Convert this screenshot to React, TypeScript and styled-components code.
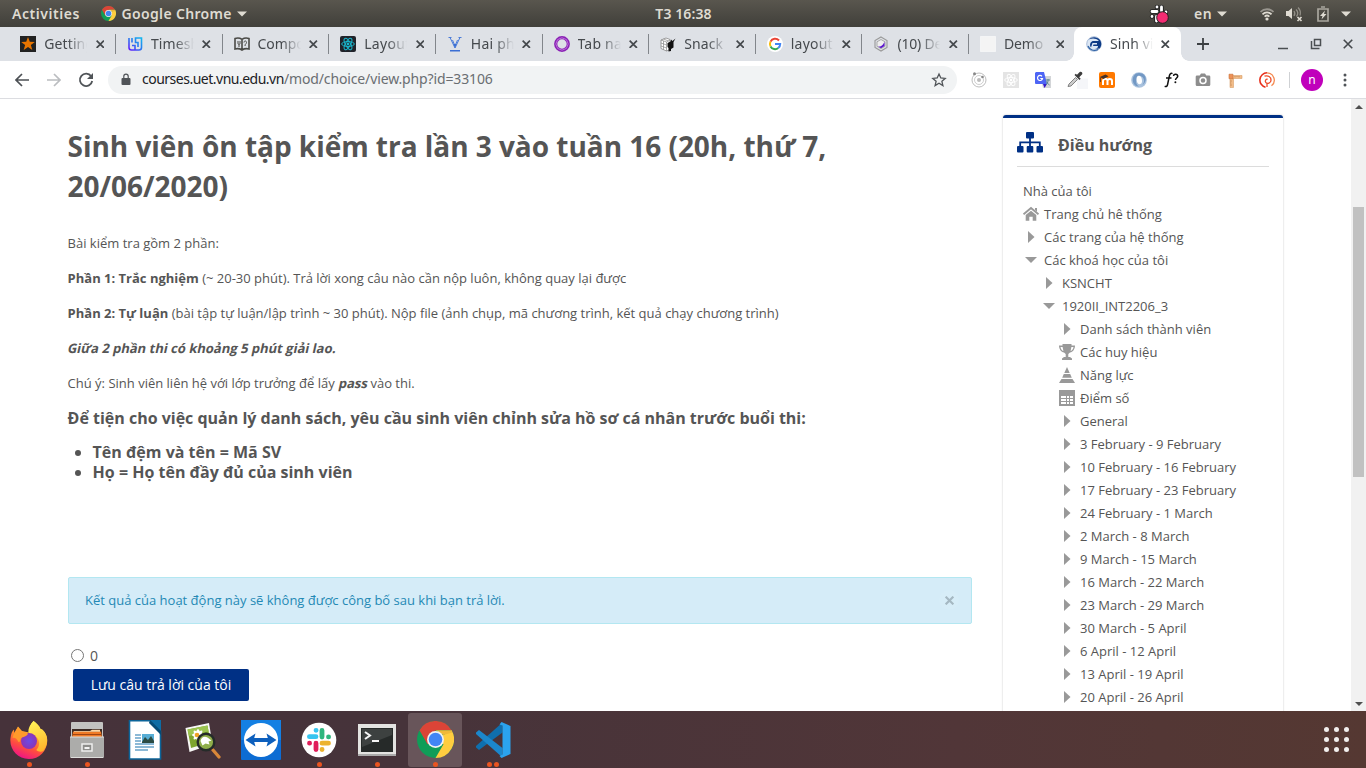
import React from "react";
import styled, { createGlobalStyle, css } from "styled-components";

const Global = createGlobalStyle`
  *{box-sizing:border-box}
  body{margin:0;background:#fff;overflow:hidden;font-family:"Open Sans",sans-serif}
  svg{display:block;flex:none}
  p,h2,h4,ul{margin:0;padding:0}
`;

const ui = css`font-family:"Noto Sans","Open Sans",sans-serif;white-space:nowrap;`;

const Desktop = styled.div`width:1366px;height:768px;display:flex;flex-direction:column;overflow:hidden;`;

const TopBar = styled.header`
  ${ui}height:27px;flex:none;display:grid;grid-template-columns:1fr auto 1fr;align-items:center;
  background:linear-gradient(#59564e,#403f3a);color:#dfdbd2;font-weight:600;font-size:14px;line-height:27px;
`;
const TopLeft = styled.div`display:flex;align-items:center;padding-left:12px;`;
const TopRight = styled.div`display:flex;align-items:center;justify-content:flex-end;height:27px;`;
const TopText = styled.span<{ $ls?: number; $ml?: number }>`
  letter-spacing:${p => p.$ls ?? 0}px;margin-left:${p => p.$ml ?? 0}px;
`;
const Gap = styled.span<{ $w: number }>`width:${p => p.$w}px;flex:none;`;
const Spacer = styled.span`flex:1;`;

const TabStrip = styled.nav`${ui}height:34px;flex:none;background:#dee1e6;display:flex;align-items:stretch;padding-left:9.300px;`;
const Tab = styled.div<{ $active?: boolean }>`
  width:106.650px;flex:none;display:flex;align-items:center;padding-left:11px;position:relative;
  ${p => p.$active ? css`
    background:#fff;border-radius:8px 8px 0 0;margin-left:-1.800px;padding-left:12px;
    &::before,&::after{content:"";position:absolute;bottom:0;width:8px;height:8px;}
    &::before{left:-8px;background:radial-gradient(circle at 0 0,transparent 7.5px,#fff 8px);}
    &::after{right:-8px;background:radial-gradient(circle at 100% 0,transparent 7.5px,#fff 8px);}
  ` : ""}
`;
const TabTitle = styled.span<{ $ls: number }>`
  width:43px;margin-left:8px;overflow:hidden;font-size:14px;line-height:34px;color:#45494d;letter-spacing:${p => p.$ls}px;
  mask-image:linear-gradient(90deg,#000 55%,transparent 100%);
`;
const TabClose = styled.span`margin-left:8.500px;`;
const TabRule = styled.i`width:1px;height:20px;background:#82868b;margin-left:auto;`;
const WindowButtons = styled.div`margin-left:auto;display:flex;align-items:center;gap:21px;padding-right:13px;`;
const NewTab = styled.div`display:flex;align-items:center;padding-left:16px;`;

const Toolbar = styled.div`${ui}height:38px;flex:none;display:flex;align-items:center;border-bottom:1px solid #dcdde1;background:#fff;`;
const Address = styled.div`
  width:849px;height:28px;border-radius:14px;background:#f1f3f4;display:flex;align-items:center;padding:0 10px 0 12px;
  font-size:14px;color:#6a6e72;
`;
const Url = styled.span<{ $ls: number; $host?: boolean }>`letter-spacing:${p => p.$ls}px;margin-top:-2px;${p => p.$host ? "color:#202124;" : ""}`;
const Extensions = styled.div`display:flex;align-items:center;gap:16px;margin-left:14px;`;
const Divider = styled.i`width:1px;height:16px;background:#cfd1d4;margin-left:14px;`;
const Avatar = styled.div`width:22px;height:22px;border-radius:50%;background:#c000bb;color:#fff;font-size:12px;line-height:21px;text-align:center;margin-left:11px;`;

const Viewport = styled.div`height:612px;flex:none;display:flex;overflow:hidden;color:#555;`;
const Main = styled.main`width:904px;margin-left:67.600px;padding-top:27px;flex:none;`;
const Title = styled.h2`font-size:28px;line-height:40px;font-weight:700;color:#555;margin-bottom:27px;letter-spacing:-.035px;`;
const Para = styled.p`font-size:13px;line-height:20px;margin-bottom:15px;`;
const Slanted = styled.strong<{ $shift?: number }>`
  display:inline-block;font-weight:700;transform:skewX(-12deg);margin:0 ${p => -(p.$shift ?? 0)}px 0 ${p => p.$shift ?? 0}px;
`;
const Sub = styled.h4`font-size:16px;line-height:20px;font-weight:700;letter-spacing:-.008px;`;
const Bullets = styled.ul`margin:14px 0 0 25px;font-size:16px;line-height:20px;font-weight:700;`;
const Notice = styled.div`
  height:47px;margin-top:95px;background:#d5ecf8;border:1px solid #b3e7f1;border-radius:2px;color:#2489b5;font-size:13px;
  display:flex;align-items:center;justify-content:space-between;padding:0 15.500px 1px 16.400px;
`;
const Dismiss = styled.span`
  width:20px;height:20px;margin-right:-4px;border-radius:50%;display:flex;align-items:center;justify-content:center;background:#d7edf8;
`;
const Choice = styled.label`display:flex;align-items:center;gap:6px;margin:21px 0 0 3.400px;height:20px;font-size:14px;`;
const Radio = styled.span`width:13px;height:13px;border:1px solid #767676;border-radius:50%;background:#fff;`;
const Submit = styled.button`
  display:block;width:176px;height:32px;margin:4px 0 0 5.400px;border:0;border-radius:2px;background:#003085;color:#fff;
  font:14px/32px "Open Sans",sans-serif;padding:0;
`;

const Panel = styled.aside`
  width:280px;height:700px;margin:16px 0 0 31.400px;flex:none;border-top:3px solid #003085;border-radius:3px;
  box-shadow:0 0 2px rgba(0,0,0,.25);padding:0 14px;
`;
const PanelHead = styled.div`height:49px;display:flex;align-items:center;border-bottom:1px solid #dcdcdc;padding-top:1px;font-size:16px;font-weight:700;gap:15px;`;
const HeadText = styled.span`padding-top:5px;`;
const Tree = styled.div`padding-top:12px;`;
const Node = styled.div<{ $depth: number }>`
  display:flex;align-items:center;height:23px;font-size:13px;gap:5px;padding-left:${p => 6 + p.$depth * 18}px;white-space:nowrap;
`;
const NodeIcon = styled.span`padding-top:1px;`;
const Scroll = styled.div`
  width:15px;height:612px;margin-left:auto;background:#f1f1f1;display:flex;flex-direction:column;align-items:center;padding:6px 0 5px;
`;
const Thumb = styled.div`width:11px;height:270px;background:#c1c1c1;margin-top:98px;margin-bottom:auto;`;

const Dock = styled.footer`
  height:57px;flex:none;display:flex;align-items:center;gap:4px;padding-left:2px;
  background:linear-gradient(90deg,#46323a 0%,#46333a 30%,#513638 70%,#553832 100%);
`;
const DockItem = styled.div<{ $on?: boolean }>`
  width:54px;height:54px;border-radius:3px;display:flex;align-items:center;justify-content:center;position:relative;
  background:${p => (p.$on ? "#68555a" : "transparent")};
`;
const Running = styled.div`position:absolute;left:0;right:0;bottom:0;display:flex;justify-content:center;gap:2px;`;
const Dot = styled.i`width:5px;height:5px;border-radius:50%;background:#e95420;`;
const Apps = styled.div`display:grid;grid-template-columns:repeat(3,5.400px);gap:4.600px;margin-left:auto;margin-right:16.800px;`;
const AppDot = styled.i`width:5.400px;height:5.400px;border-radius:50%;background:#f2efee;`;

const Svg = ({ w = 16, h = w, box = 16, boxH = box, children }: { w?: number; h?: number; box?: number; boxH?: number; children: React.ReactNode }) => (
  <svg width={w} height={h} viewBox={`0 0 ${box} ${boxH}`} fill="none">{children}</svg>
);
const Chrome = ({ s }: { s: number }) => (
  <Svg w={s} box={48}>
    <circle cx="24" cy="24" r="24" fill="#109d58" />
    <path d="M24 24L44.800 12A24 24 0 0 1 24 48L34.400 30Z" fill="#ffcd40" />
    <path d="M24 24L13.600 30L3.200 12A24 24 0 0 1 44.800 12H24Z" fill="#db4437" />
    <path d="M24 12H44.800A24 24 0 0 1 46 15L34 18Z" fill="#f0b93a" />
    <circle cx="24" cy="24" r="11" fill="#f1f1f1" /><circle cx="24" cy="24" r="8.800" fill="#4285f4" />
  </Svg>
);
const Caret = () => <Svg w={10} h={6} box={10} boxH={6}><path d="M0 .5h10L5 5.5z" fill="#dfdbd2" /></Svg>;
const Cross = ({ s = 8.600, c = "#45494d", t = 1.600 }) => <Svg w={s} box={8}><path d="M.6.6l6.800 6.800M7.400.6L.6 7.400" stroke={c} strokeWidth={t} /></Svg>;

const atom = (c: string, t = .9) => [0, 60, 120].map(a => <ellipse key={a} cx="8" cy="8" rx="6.3" ry="2.5" transform={`rotate(${a} 8 8)`} stroke={c} strokeWidth={t} />);
const favicons = [
  <Svg><path d="M0 0h16v16H0z" fill="#222" /><path d="M8 1l1.800 4.700 5 .2-3.900 3.100 1.400 4.900L8 11.100l-4.300 2.800L5.100 9 1.200 5.900l5-.2z" fill="#e87500" /></Svg>,
  <Svg>
    <defs><linearGradient id="ts" gradientUnits="userSpaceOnUse" x1="14" y1="1" x2="2" y2="15"><stop stopColor="#10b8ee" /><stop offset=".5" stopColor="#2a76f0" /><stop offset="1" stopColor="#6a10ff" /></linearGradient></defs>
    <path d="M2 2v9.500a2.500 2.500 0 0 0 2.500 2.500H12a2.500 2.500 0 0 0 2.500-2.500V2H8.500v4.500H11V11M5 2v4.500M5 9.500h3V14" stroke="url(#ts)" strokeWidth="1.600" />
  </Svg>,
  <Svg><path d="M1 2.500c3-1 5-.5 7 .8 2-1.300 4-1.800 7-.8v10.500c-3-.8-5-.3-7 1-2-1.300-4-1.800-7-1zM8 3.500v10" stroke="#4a4a46" strokeWidth="1.600" /><path d="M4 5v2.500c0 1 2 1 2 0V5M5 8v3M10 6.500c0-2 2.500-2 2.500 0 0 1.500-1.500 1-1.500 3.500" stroke="#4a4a46" /></Svg>,
  <Svg><rect width="16" height="16" rx="2" fill="#20232a" />{atom("#19b5cb", 1)}<circle cx="8" cy="8" r="1.400" fill="#19b5cb" /></Svg>,
  <Svg><path d="M3 1.500l5 10.500 5-10.500M1.500 1.500h3M11.500 1.500h3M5.500 4L8 10l2.500-6" stroke="#4a7bd8" strokeWidth="1" /><path d="M6.500 8h3L8 12zM3 14h10v1.400H3z" fill="#3b6fd4" /></Svg>,
  <Svg><circle cx="8" cy="8" r="6.300" stroke="#8a20b5" strokeWidth="3.200" /><path d="M8 1.800l4.400 1.800 1.800 4.400-1.800 4.400L8 14.200l-4.400-1.800L1.800 8l1.800-4.400z" stroke="#d9a4ec" strokeWidth=".6" /></Svg>,
  <Svg><path d="M1 4l5-2 4 1.500v10L6.500 15 1 12.500z" stroke="#888" strokeWidth=".8" fill="#fff" /><path d="M1 4l5.500 2L10 4M6.500 6v9M1 7l5.500 2M1 10l5.500 2M3.500 5v8.500M3.500 3l5 2" stroke="#888" strokeWidth=".7" /><path d="M7.500 7l3-1.500.5-2 1.500 1.500L15.500 2.500 13.500 6v5.500L11 13v2l-2.500.5V12L7.500 11z" fill="#111" /></Svg>,
  <Svg><circle cx="8" cy="8" r="8" fill="#fff" /><path d="M12 4.500A5.200 5.200 0 0 0 3.500 5.600" stroke="#ea4335" strokeWidth="2" /><path d="M3.500 5.600a5.200 5.200 0 0 0 0 4.800" stroke="#fbbc05" strokeWidth="2" /><path d="M3.500 10.400a5.200 5.200 0 0 0 7.800 1.600" stroke="#34a853" strokeWidth="2" /><path d="M8 8h5.200c0 1.800-.8 3.100-1.900 4" stroke="#4285f4" strokeWidth="2" /></Svg>,
  <Svg><path d="M8 1l6 3.500v7L8 15l-6-3.500v-7z" stroke="#999" strokeWidth="1.100" /><path d="M8 3.500l4 2.300v4.500l-4 2.300-4-2.300V5.800z" stroke="#aaa" fill="#eee" /><path d="M11.500 6v4L8 12.300 5 10.500c4 .3 4.500-1.500 6.500-4.500z" fill="#5b16cd" /></Svg>,
  <Svg><path d="M.5.5h15v15H.5z" fill="#f4f4f4" stroke="#fff" strokeDasharray="1 1" /></Svg>,
  <Svg><circle cx="8" cy="8" r="7.300" fill="#dce7f4" stroke="#8aa4c8" strokeWidth=".7" /><path d="M3 3.500C5.500.5 11 .3 14 4c2 3 1.500 6.500-.5 8.500L9 13c2.500-.3 3-2 3-3H7l.5-1.500H11V7H6.500L5 11.500C3 9 4.500 5.500 7 5h6C10 2 6 2 3 3.500z" fill="#0d3b86" /><path d="M2 10c1.500 4 6 5.500 10 3.500" stroke="#2f62a5" strokeWidth="1.300" /></Svg>,
];
const tabs: [string, number][] = [["Getting", .1], ["Timesheet", .1], ["Components", -.1], ["Layout", .3], ["Hai phần", .2], ["Tab navigation", .2], ["Snack", .1], ["layout re", .2], ["(10) Dev", -.2], ["Demo a", -.2], ["Sinh viên", .1]];

const extIcons = [
  <Svg><circle cx="8" cy="8" r="7" stroke="#b5b5b5" strokeWidth=".9" /><circle cx="8" cy="8" r="4.500" stroke="#c0c0c0" strokeWidth=".8" /><circle cx="8" cy="8" r="2" fill="#bbb" /><circle cx="3.500" cy="1.800" r="1.500" fill="#888" /><circle cx="11.500" cy="5" r="1.300" fill="#888" /></Svg>,
  <Svg><path d="M0 0h16v16H0z" fill="#e4e4e4" />{atom("#fff")}<circle cx="8" cy="8" r="1.200" fill="#fff" /></Svg>,
  <Svg><path d="M5 4h11v12H8z" fill="#d3d5d8" /><path d="M1 0h8l3 12H1a1 1 0 0 1-1-1V1z" fill="#4d65f5" /><path d="M8 12h4l-2.500 4z" fill="#3518c8" /><path d="M7 4.400A2.500 2.500 0 1 0 7.500 6.500H5.300" stroke="#fff" strokeWidth="1.200" /><path d="M10.800 8H15M13 7v1.500c0 2-1 3.500-2 4.500M11.500 9.500c.5 1.500 1.500 2.500 3 3.500" stroke="#58858e" /></Svg>,
  <Svg w={21} h={18} box={21} boxH={18}><path d="M10 7.500h11V18H10z" fill="#f5f6f9" /><path d="M1 15.500L2 13l6.500-6.500 2 2L4 15z" fill="#ccc" stroke="#777" strokeWidth=".9" /><path d="M7.500 4l5 5 1.200-1.200-1.500-1.500 3-3c.8-1.500-1-3.300-2.500-2.300L10 3.800l-1.300-1z" fill="#3d3d3d" /></Svg>,
  <Svg><rect width="16" height="16" rx="2" fill="#ff7900" /><path d="M4 13V9c0-.8.200-1.300.800-1.800M8.500 13V8.500M13 13V9c0-2.800-4.500-2.800-4.500 0C8.500 6.500 6 6.500 5 7.500" stroke="#fff" strokeWidth="2" /><path d="M.8 5L6.500 2.500l3 1.800L4.500 7z" fill="#463127" /><path d="M1.500 5.500V10" stroke="#463127" strokeWidth=".8" /></Svg>,
  <Svg><circle cx="8" cy="8" r="7.800" fill="#a9c2de" /><path d="M8 1C3 1 1 6 2 10c.8 3 3.500 4.500 6 4.500-4-2-4-8.500 0-10 4-1 7 4 3.500 8.500 5-3 4.500-12-3.500-12z" fill="#7298c4" /><ellipse cx="8.300" cy="8" rx="2.600" ry="4.200" fill="#fff" transform="rotate(-10 8 8)" /></Svg>,
  <Svg><path d="M9.500 1.600c-2-1-3 1-3.300 3L4.700 12c-.4 2.300-1.500 3-3 2.300M3 6h5.500" stroke="#111" strokeWidth="1.500" /><path d="M10.500 4c.2-2.500 4.500-2.200 4.200.3-.2 1.700-2.200 1.700-2.200 3.700" stroke="#111" strokeWidth="1.500" /><circle cx="12.400" cy="10.300" r="1" fill="#111" /></Svg>,
  <Svg><path d="M2 3.500h2.700L6 1.500h4l1.300 2H14a1.300 1.300 0 0 1 1.300 1.300v8A1.300 1.300 0 0 1 14 14H2a1.300 1.300 0 0 1-1.300-1.200v-8A1.300 1.300 0 0 1 2 3.500z" fill="#8d8d8d" /><circle cx="8" cy="8.500" r="3" stroke="#fff" strokeWidth="1.500" /></Svg>,
  <Svg><path d="M3 6h3.500v9.500H3z" fill="#f3bd88" stroke="#d9a06a" strokeWidth=".6" /><path d="M5 3.500h10v3H5z" fill="#f3bd88" stroke="#d9a06a" strokeWidth=".6" /><path d="M2 2.200h4v4.500H2z" fill="#ee9257" stroke="#c9743c" strokeWidth=".6" /><path d="M8 4v1.300M10 4v1M12 4v1.300M3.300 9h1.500M3.300 11h1M3.300 13h1.500" stroke="#a56b3d" strokeWidth=".6" /></Svg>,
  <Svg><path d="M6.500 15.200A7.300 7.300 0 0 1 8 .8" stroke="#e8301c" strokeWidth="1.600" /><path d="M8 .8a7.300 7.300 0 0 1 4.500 13" stroke="#f58a50" strokeWidth="1.300" /><path d="M5.500 4.200c3.500-1.200 6.700.8 6.500 4-.2 2.800-3.500 4-5.200 2.300-1.300-1.500.2-3.700 1.900-3.200M8 11v4" stroke="#ef4e2c" strokeWidth="1.300" /></Svg>,
];
const ExtSlot = styled.span`width:16px;height:16px;display:flex;align-items:center;`;

const Slack = () => (
  <Svg w={36} box={36}><circle cx="18" cy="18" r="17.300" fill="#fff" />
    <g strokeWidth="4.800" strokeLinecap="round">
      <path d="M15 8.300h.1M8.400 14.700H15" stroke="#36c5f0" /><path d="M21 8.400V15M27.500 14.900h.1" stroke="#2eb67d" />
      <path d="M21 21.200h6.500M21 27.500h.1" stroke="#ecb22e" /><path d="M15 21.200v6.400M8.500 21.200h.1" stroke="#e01e5a" />
    </g></Svg>
);
const dockIcons: [React.ReactNode, number][] = [
  [<Svg w={38} box={38}>
    <defs>
      <linearGradient id="ff" x1=".75" y1=".05" x2=".35" y2="1"><stop stopColor="#fff04a" /><stop offset=".4" stopColor="#ff9a29" /><stop offset=".7" stopColor="#ff4c40" /><stop offset="1" stopColor="#ef1387" /></linearGradient>
      <linearGradient id="fy" x1=".3" y1="0" x2=".6" y2="1"><stop stopColor="#fff256" /><stop offset="1" stopColor="#ffb52c" /></linearGradient>
      <radialGradient id="fp"><stop stopColor="#6d4ae6" /><stop offset="1" stopColor="#8b35b5" /></radialGradient>
    </defs>
    <path d="M23.500 0c3 2 6 5 7 8 1.500-.2 5 3 6.300 8 2.500 11-6 22-18 22C7.500 38-1 28 .5 17 1 13 2 10 4 8.500c0 1.500.2 2.500.7 3.500L8 5.500l4 4.500 7 1.500C19 7 20.500 3 23.500 0z" fill="url(#ff)" />
    <path d="M23.500 0c3 2 6 5 7 8 1.500-.2 5 3 6.300 8 1 5-.5 10-3.500 14-2 1-5 1-7-1 3-3 4-8 1-12-3-3-8-3-9-6 0-4 2-8 5.200-11z" fill="url(#fy)" />
    <circle cx="19" cy="20" r="8" fill="url(#fp)" /><path d="M2.500 17c1-4 3-8 5.500-11 1 3 2.500 4.500 5 4.700 2 0 4 .8 5 2.300-1 2-4 3-6 3.500-2 1-1.500 5-3.500 4.500C7 17.500 4.500 16 2.500 17z" fill="#ff9a2b" />
  </Svg>, 1],
  [<Svg w={36} h={38} box={36} boxH={38}>
    <path d="M2 2q0-1 1-1h30q1 0 1 1v15H2z" fill="#c3c3c1" /><path d="M3 8h30v9H3z" fill="#3b2a24" /><path d="M4 10.500h28l1 6.500H3z" fill="#f07a26" /><path d="M5 10h16l2-1.200h8v2H5z" fill="#ffd7a5" /><path d="M4 13.500h28" stroke="#9f4515" />
    <path d="M1 16h34v20q0 1-1 1H2q-1 0-1-1z" fill="#acacaa" /><path d="M1 16h34M2 36.500h32" stroke="#dededc" /><path d="M13 23h10v7H13z" fill="#8d8d8b" stroke="#eee" strokeWidth="1.500" /><path d="M15.500 26h5v2h-5z" fill="#f4f4f4" />
  </Svg>, 1],
  [<Svg w={34} h={40} box={34} boxH={40}>
    <path d="M1.500 .8h21L32.500 11v28h-31z" fill="#fff" stroke="#0b6499" strokeWidth="1.600" /><path d="M22 0h11v11z" fill="#0d6ca4" /><path d="M22 0l11 11V15L21 3z" fill="#054b76" />
    <path d="M14 14h12v9H14z" fill="#57add5" /><path d="M14 22l3-5 3 3 3-4 3 5v2H14z" fill="#2b4b43" /><path d="M7 15h6M7 18h6M7 21h6M7 24h19M7 27h19M7 30h13" stroke="#1b75ad" strokeWidth="1.200" />
  </Svg>, 0],
  [<Svg w={38} box={38}>
    <path d="M1.500 7L25 2l3.500 21L5.500 31z" fill="#f7f7f5" /><path d="M3.500 8.500l20-4L26.500 21 7 27z" fill="#7da52d" /><path d="M3.500 8.500l20-4 1 6L5 15z" fill="#9cc450" />
    <g fill="#fff">{[0, 45, 90, 135].map(a => <ellipse key={a} cx="14" cy="14" rx="6" ry="2" transform={`rotate(${a} 14 14)`} />)}</g><circle cx="13" cy="14" r="2.300" fill="#eea126" />
    <path d="M29 29l6 7" stroke="#d98739" strokeWidth="3.300" strokeLinecap="round" /><circle cx="22" cy="21" r="8.300" fill="#8fae4a" stroke="#252b29" strokeWidth="2.400" /><path d="M16.500 20c1-4 4-5 7-3.500l4 3-3 1 1 3-4-1-3 2z" fill="#fff" />
  </Svg>, 0],
  [<Svg w={40} box={40}><rect width="40" height="40" rx="1" fill="#0d6cd3" /><path d="M0 0h40v20H0z" fill="#1480e3" /><circle cx="20" cy="20" r="17" fill="#fff" /><path d="M4.500 20l10-6.500-1.300 4.500h13.600l-1.300-4.500 10 6.500-10 6.500 1.300-4.500H13.200l1.300 4.500z" fill="#0d5fbd" /></Svg>, 0],
  [<Slack />, 1],
  [<Svg w={38} h={32} box={38} boxH={32}><path d="M0 0h38v31H0z" fill="#e3e3e1" /><path d="M0 30h38v2H0z" fill="#aaa" /><path d="M3 4h32v24H3z" fill="#262a29" /><path d="M4 5h30v6L4 23z" fill="#3d4140" /><path d="M7 8l5 3.500-5 3.500M14 17h7" stroke="#f5f5f5" strokeWidth="2" /></Svg>, 1],
  [<Chrome s={37} />, 1],
  [<Svg w={36} box={36}><path d="M1 25.500L4 28 27.500 10.500V.5L1 24z" fill="#0f6fae" /><path d="M1 10.500L4 8l23.500 18V35.500L1 12z" fill="#1b87cc" /><path d="M26.500 0L35.500 4v28l-9 4-2-2 3-1.500V3.500l-3-1z" fill="#2ba3ee" /></Svg>, 2],
];

type Kind = "none" | "home" | "right" | "down" | "cup" | "pyramid" | "table";
const glyphs: Record<Kind, React.ReactNode> = {
  none: null,
  home: <Svg><path d="M.5 8.300L8 2l7.500 6.300" stroke="#999" strokeWidth="2" /><path d="M12 2h2v4l-2-2zM2.700 9L8 4.700 13.300 9v5.700H9.700v-4H6.300v4H2.700z" fill="#999" /></Svg>,
  right: <Svg><path d="M5 2l6.500 6L5 14z" fill="#999" /></Svg>,
  down: <Svg><path d="M2 5h12L8 11z" fill="#999" /></Svg>,
  cup: <Svg><path d="M3.500 0h9v1.500H16C16 5 14 8 11 8.500L9.300 10v3H11l2 1.500V16H3v-1.500L5 13h1.700v-3L5 8.500C2 8 0 5 0 1.500h3.500z" fill="#999" /><path d="M3.600 3H1.500c.3 2 1.300 3.400 2.900 4zM12.400 3h2.100c-.3 2-1.300 3.400-2.900 4z" fill="#fff" /></Svg>,
  pyramid: <Svg><path d="M8 0l2.700 6H5.300zM4.800 7h6.400l1.600 3.700H3.200zM2.500 12h11L16 16H0z" fill="#999" /></Svg>,
  table: <Svg><path d="M0 0h16v16H0z" fill="#999" /><path d="M2 6h12v8H2z" fill="#fff" /><path d="M2 8.500h12M2 11.500h12M7.500 6v8M10.500 6v8" stroke="#999" /></Svg>,
};
const nodes: [number, Kind, string][] = [
  [0, "none", "Nhà của tôi"], [0, "home", "Trang chủ hê thống"], [0, "right", "Các trang của hệ thống"], [0, "down", "Các khoá học của tôi"],
  [1, "right", "KSNCHT"], [1, "down", "1920II_INT2206_3"], [2, "right", "Danh sách thành viên"], [2, "cup", "Các huy hiệu"], [2, "pyramid", "Năng lực"], [2, "table", "Điểm số"],
  ...["General", "3 February - 9 February", "10 February - 16 February", "17 February - 23 February", "24 February - 1 March", "2 March - 8 March", "9 March - 15 March", "16 March - 22 March", "23 March - 29 March", "30 March - 5 April", "6 April - 12 April", "13 April - 19 April", "20 April - 26 April"].map((t): [number, Kind, string] => [2, "right", t]),
];

export default function App() {
  return (
    <Desktop>
      <Global />
      <TopBar>
        <TopLeft>
          <TopText $ls={.56}>Activities</TopText><Gap $w={20.5} /><Chrome s={15} />
          <TopText $ls={.34} $ml={6}>Google Chrome</TopText><Gap $w={5.5} /><Caret />
        </TopLeft>
        <TopText $ls={.1} $ml={1}>T3 16:38</TopText>
        <TopRight>
          <Svg w={20} box={20}><g stroke="#222" strokeWidth="4.600" strokeLinecap="round"><path d="M8 3v0M12.500 3v4M3 7.500h5M17 8h0M3 12.500h0M7.500 12.500v4.500" /></g><g stroke="#fff" strokeWidth="2.800" strokeLinecap="round"><path d="M8 3v0M12.500 3v4M3 7.500h5M17 8h0M3 12.500h0M7.500 12.500v4.500" /></g><circle cx="13.500" cy="13.500" r="5.800" fill="#f32b72" stroke="#222" /></Svg>
          <Gap $w={25} /><TopText $ls={.4}>en</TopText><Gap $w={5} /><Caret /><Gap $w={33} />
          <Svg w={14} box={14}><path d="M.5 5C4 1.300 10 1.300 13.500 5" stroke="#99968f" strokeWidth="1.800" /><path d="M2.500 7.300c2.500-2.700 6.500-2.700 9 0M4.600 9.600c1.400-1.300 3.400-1.300 4.800 0" stroke="#dfdbd2" strokeWidth="1.700" /><circle cx="7" cy="12" r="1.600" fill="#dfdbd2" /></Svg>
          <Gap $w={12} />
          <Svg w={17} h={16} box={17} boxH={16}><path d="M0 5h2.500L6 2v11L2.500 10H0z" fill="#dfdbd2" /><path d="M8 5c1 1.500 1 3.500 0 5M10 3.500c2 2 2 5 .5 7M12 1.500c2.500 2.500 3 5 2 8" stroke="#918e86" strokeWidth="1.300" /><path d="M11.500 11l4 4M15.500 11l-4 4" stroke="#dfdbd2" strokeWidth="1.700" /></Svg>
          <Gap $w={14} />
          <Svg w={12} h={16} box={12} boxH={16}><path d="M1 3h10v12H1zM4 1h4" stroke="#a9a69e" strokeWidth="1.700" /><path d="M8 4.500L3 10h2.500L4.500 13.500 9.500 8H7z" fill="#dfdbd2" /></Svg>
          <Gap $w={12} /><Caret /><Gap $w={15} />
        </TopRight>
      </TopBar>
      <TabStrip>
        {tabs.map(([t, ls], i) => (
          <Tab key={t} $active={i === 10}>
            {favicons[i]}<TabTitle $ls={ls}>{t}</TabTitle><TabClose><Cross /></TabClose>{i < 9 && <TabRule />}
          </Tab>
        ))}
        <NewTab><Svg w={12} box={12}><path d="M6 0v12M0 6h12" stroke="#3c4043" strokeWidth="1.800" /></Svg></NewTab>
        <WindowButtons>
          <Svg w={12} box={12}><path d="M1 10.500h10" stroke="#4b4f52" strokeWidth="1.500" /></Svg>
          <Svg w={12} box={12}><path d="M4.500 1.500h6v6h-6zM1.500 3v7.500h8" stroke="#4b4f52" strokeWidth="1.500" /></Svg>
          <Cross s={10} t={1.3} />
        </WindowButtons>
      </TabStrip>
      <Toolbar>
        <Gap $w={15} /><Svg w={14} box={14}><path d="M14 7H1.500M7 1L1 7l6 6" stroke="#4c5054" strokeWidth="1.700" /></Svg>
        <Gap $w={18} /><Svg w={14} box={14}><path d="M0 7h12.500M7 1l6 6-6 6" stroke="#bbbdc0" strokeWidth="1.700" /></Svg>
        <Gap $w={17} /><Svg w={16} box={16}><path d="M13.200 4.300A6.200 6.200 0 1 0 14.200 9" stroke="#505458" strokeWidth="1.800" /><path d="M15 1v6H9z" fill="#505458" /></Svg>
        <Gap $w={14} />
        <Address>
          <Svg w={12} h={14} box={12} boxH={14}><path d="M2.500 5h7q1 0 1 1v5q0 1-1 1h-7q-1 0-1-1V6q0-1 1-1z" fill="#505458" /><path d="M3.800 6V3.300a2.200 2.200 0 0 1 4.400 0V6" stroke="#505458" strokeWidth="1.200" /></Svg>
          <Gap $w={10} /><Url $host $ls={-.5}>courses.uet.vnu.edu.vn</Url><Url $ls={-.13}>/mod/choice/view.php?id=33106</Url>
          <Spacer />
          <Svg><path d="M8 2l1.800 4 4.400.4-3.300 2.900 1 4.300L8 11.300l-3.900 2.300 1-4.300-3.300-2.900L6.200 6z" stroke="#505458" strokeWidth="1.300" /></Svg>
        </Address>
        <Extensions>{extIcons.map((e, i) => <ExtSlot key={i}>{e}</ExtSlot>)}</Extensions>
        <Divider /><Avatar>n</Avatar><Gap $w={20} />
        <Svg w={4} h={14} box={4} boxH={14}><circle cx="2" cy="2" r="1.500" fill="#505458" /><circle cx="2" cy="7" r="1.500" fill="#505458" /><circle cx="2" cy="12" r="1.500" fill="#505458" /></Svg>
      </Toolbar>
      <Viewport>
        <Main>
          <Title>Sinh viên ôn tập kiểm tra lần 3 vào tuần 16 (20h, thứ 7, 20/06/2020)</Title>
          <Para>Bài kiểm tra gồm 2 phần:</Para>
          <Para><b>Phần 1: Trắc nghiệm</b> (~ 20-30 phút). Trả lời xong câu nào cần nộp luôn, không quay lại được</Para>
          <Para><b>Phần 2: Tự luận</b> (bài tập tự luận/lập trình ~ 30 phút). Nộp file (ảnh chụp, mã chương trình, kết quả chạy chương trình)</Para>
          <Para><Slanted $shift={.7}>Giữa 2 phần thi có khoảng 5 phút giải lao.</Slanted></Para>
          <Para>Chú ý: Sinh viên liên hệ với lớp trưởng để lấy <Slanted $shift={1}>pass</Slanted> vào thi.</Para>
          <Sub>Để tiện cho việc quản lý danh sách, yêu cầu sinh viên chỉnh sửa hồ sơ cá nhân trước buổi thi:</Sub>
          <Bullets><li>Tên đệm và tên = Mã SV</li><li>Họ = Họ tên đầy đủ của sinh viên</li></Bullets>
          <Notice>Kết quả của hoạt động này sẽ không được công bố sau khi bạn trả lời.<Dismiss><Cross s={9} c="#a5b8c2" t={1.9} /></Dismiss></Notice>
          <Choice><Radio />0</Choice>
          <Submit>Lưu câu trả lời của tôi</Submit>
        </Main>
        <Panel>
          <PanelHead>
            <Svg w={26} h={21} box={26} boxH={21}><path d="M10 0h6q1 0 1 1v4.500q0 1-1 1h-6q-1 0-1-1V1q0-1 1-1zM1 14h4.500q1 0 1 1v4.500q0 1-1 1H1q-1 0-1-1V15q0-1 1-1zM10.700 14h4.600q1 0 1 1v4.500q0 1-1 1h-4.600q-1 0-1-1V15q0-1 1-1zM20.500 14H25q1 0 1 1v4.500q0 1-1 1h-4.500q-1 0-1-1V15q0-1 1-1z" fill="#003085" /><path d="M13 6v8M3.200 14v-3.700h19.600V14" stroke="#003085" strokeWidth="1.800" /></Svg>
            <HeadText>Điều hướng</HeadText>
          </PanelHead>
          <Tree>{nodes.map(([d, k, t]) => <Node key={t} $depth={d}>{glyphs[k] && <NodeIcon>{glyphs[k]}</NodeIcon>}{t}</Node>)}</Tree>
        </Panel>
        <Scroll>
          <Svg w={8} h={4} box={8} boxH={4}><path d="M0 4l4-4 4 4z" fill="#505050" /></Svg>
          <Thumb />
          <Svg w={8} h={4} box={8} boxH={4}><path d="M0 0l4 4 4-4z" fill="#505050" /></Svg>
        </Scroll>
      </Viewport>
      <Dock>
        {dockIcons.map(([ic, n], i) => (
          <DockItem key={i} $on={i === 7}>{ic}<Running>{Array.from({ length: n }, (_, k) => <Dot key={k} />)}</Running></DockItem>
        ))}
        <Apps>{Array.from({ length: 9 }, (_, k) => <AppDot key={k} />)}</Apps>
      </Dock>
    </Desktop>
  );
}
